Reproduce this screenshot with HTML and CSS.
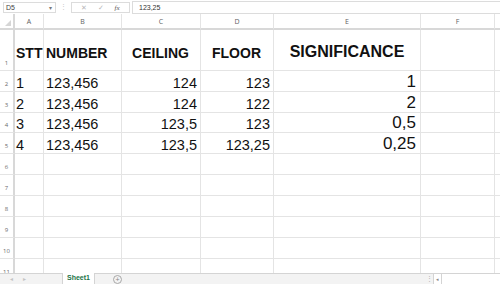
FILE: index.html
```html
<!DOCTYPE html>
<html lang="en">
  <head>
    <meta charset="UTF-8" />
    <title>Sheet1</title>
    <link rel="stylesheet" href="styles.css">
  </head>
  <body>
    <div class="app">
      <!-- Formula bar -->
      <div class="formula-bar">
        <div class="name-box"><span>D5</span><span class="caret">▾</span></div>
        <span class="grip">⋮</span>
        <div class="fx-box">
          <span class="fx-btn">✕</span>
          <span class="fx-btn">✓</span>
          <span class="fx-btn fx">fx</span>
        </div>
        <div class="formula-input">123,25</div>
      </div>

      <!-- Grid -->
      <div class="sheet" id="sheet"></div>

      <!-- Sheet tabs -->
      <div class="tab-bar">
        <div class="tab-nav"><span>◂</span><span>▸</span></div>
        <div class="tab active">Sheet1</div>
        <div class="tab-add">+</div>
        <div class="tab-fill"></div>
        <span class="grip small">⋮</span>
        <div class="hscroll"><span class="hscroll-btn">◂</span></div>
      </div>
    </div>

    <script>
      const columns = ["A", "B", "C", "D", "E", "F", ""];

      const rows = [
        { height: 41, head: true, cells: ["STT", "NUMBER", "CEILING", "FLOOR", "SIGNIFICANCE", "", ""] },
        { height: 21, cells: ["1", "123,456", "124", "123", "1", "", ""] },
        { height: 21, cells: ["2", "123,456", "124", "122", "2", "", ""] },
        { height: 20, cells: ["3", "123,456", "123,5", "123", "0,5", "", ""] },
        { height: 21, cells: ["4", "123,456", "123,5", "123,25", "0,25", "", ""] },
        { height: 21 }, { height: 21 }, { height: 21 }, { height: 21 }, { height: 21 },
        { height: 21 }
      ];

      const sheet = document.getElementById("sheet");

      // column header row
      const corner = document.createElement("div");
      corner.className = "corner";
      corner.innerHTML = '<svg width="6" height="6" viewBox="0 0 6 6"><path d="M6 0V6H0Z" fill="#d6d6d6"/></svg>';
      sheet.appendChild(corner);

      columns.forEach((col) => {
        const div = document.createElement("div");
        div.className = "col-head";
        div.textContent = col;
        sheet.appendChild(div);
      });

      rows.forEach((row, i) => {
        const num = document.createElement("div");
        num.className = "row-head";
        num.style.height = row.height + "px";
        num.textContent = i + 1;
        sheet.appendChild(num);

        columns.forEach((col, c) => {
          const cell = document.createElement("div");
          cell.className = "cell col-" + (col || "G").toLowerCase();
          if (row.head) cell.classList.add("title");
          cell.style.height = row.height + "px";
          cell.textContent = row.cells ? row.cells[c] : "";
          sheet.appendChild(cell);
        });
      });
    </script>
  </body>
</html>
```

FILE: styles.css
```css
body {
  margin: 0;
  background: #fff;
  font-family: "Liberation Sans", Arial, sans-serif;
}

.app {
  width: 500px;
  height: 284px;
  overflow: hidden;
  display: flex;
  flex-direction: column;
  position: relative;
}

/* ---------- formula bar ---------- */

.formula-bar {
  height: 14px;
  flex: none;
  display: flex;
  align-items: stretch;
  box-sizing: border-box;
  padding-top: 1px;
  font-size: 7px;
  color: #444;
}

.name-box {
  width: 53px;
  margin: 1px 0 1px 3px;
  border: 1px solid #dcdcdc;
  display: flex;
  align-items: center;
  justify-content: space-between;
  padding: 0 3px 0 2px;
  box-sizing: border-box;
}

.caret {
  font-size: 6px;
  color: #777;
}

.grip {
  width: 15px;
  text-align: center;
  color: #c8c8c8;
  font-size: 7px;
  line-height: 12px;
}

.fx-box {
  width: 59px;
  margin: 1px 0;
  border: 1px solid #dcdcdc;
  display: flex;
  align-items: center;
  justify-content: space-around;
  padding: 0 4px;
  box-sizing: border-box;
  color: #b8b8b8;
}

.fx-btn {
  font-size: 7px;
}

.fx {
  font-style: italic;
  font-family: "Liberation Serif", serif;
  color: #555;
}

.formula-input {
  flex: 1;
  margin-left: 2px;
  border: 1px solid #dcdcdc;
  border-right: none;
  padding-left: 6px;
  display: flex;
  align-items: center;
  color: #333;
}

/* ---------- grid ---------- */

.sheet {
  flex: 1;
  display: grid;
  grid-template-columns: 15px 29px 78px 79px 73px 147px 74px 1fr;
  align-content: start;
  overflow: hidden;
}

.corner {
  height: 16px;
  box-sizing: border-box;
  border-right: 2px solid #d8d8d8;
  border-bottom: 2px solid #d8d8d8;
  display: flex;
  align-items: flex-end;
  justify-content: flex-end;
  padding: 0 2px 2px 0;
}

.col-head {
  height: 16px;
  box-sizing: border-box;
  border-right: 1px solid #e4e4e4;
  border-bottom: 2px solid #d8d8d8;
  font-family: "Open Sans", sans-serif;
  font-size: 7px;
  color: #5f5f5f;
  text-align: center;
  line-height: 15px;
}

.row-head {
  box-sizing: border-box;
  border-right: 2px solid #d8d8d8;
  border-bottom: 1px solid #e4e4e4;
  font-family: "Open Sans", sans-serif;
  font-size: 6px;
  color: #6a6a6a;
  display: flex;
  align-items: flex-end;
  justify-content: center;
  padding-bottom: 3px;
}

.cell {
  box-sizing: border-box;
  border-right: 1px solid #e4e4e4;
  border-bottom: 1px solid #e4e4e4;
  display: flex;
  align-items: flex-end;
  font-size: 14.5px;
  line-height: 1;
  color: #111;
  padding: 0 3px 1px 2px;
  white-space: nowrap;
  overflow: hidden;
}

.cell.col-a {
  padding-left: 1px;
}

.cell.col-c,
.cell.col-d,
.cell.col-e {
  justify-content: flex-end;
}

.cell.col-e {
  font-size: 17px;
  padding-right: 4px;
}

.cell.title {
  font-weight: bold;
  font-size: 14px;
  padding-bottom: 10px;
}

.cell.title.col-c,
.cell.title.col-d,
.cell.title.col-e {
  justify-content: center;
}

.cell.title.col-e {
  font-size: 16px;
  padding-right: 2px;
}

/* ---------- tabs ---------- */

.tab-bar {
  position: absolute;
  left: 0;
  right: 0;
  bottom: 0;
  height: 10px;
  background: #f3f3f3;
  border-top: 1px solid #d4d4d4;
  display: flex;
  align-items: stretch;
  font-size: 7px;
}

.tab-nav {
  width: 52px;
  display: flex;
  gap: 10px;
  padding-left: 10px;
  color: #c4c4c4;
  font-size: 6px;
  line-height: 10px;
}

.tab {
  width: 33px;
  box-sizing: border-box;
  background: #fff;
  margin-top: -1px;
  border-left: 1px solid #d4d4d4;
  border-right: 1px solid #d4d4d4;
  color: #217346;
  font-weight: bold;
  text-align: center;
  line-height: 10px;
}

.tab-add {
  width: 7px;
  height: 7px;
  margin: 1px 0 0 18px;
  border: 1px solid #a8a8a8;
  border-radius: 50%;
  color: #888;
  font-size: 7px;
  line-height: 7px;
  text-align: center;
}

.tab-fill {
  flex: 1;
}

.grip.small {
  width: 8px;
  line-height: 10px;
  color: #b0b0b0;
}

.hscroll {
  width: 66px;
  background: #fff;
  border-left: 1px solid #d4d4d4;
  display: flex;
}

.hscroll-btn {
  width: 7px;
  border-right: 1px solid #d4d4d4;
  color: #888;
  font-size: 5px;
  line-height: 10px;
  text-align: center;
}
```
